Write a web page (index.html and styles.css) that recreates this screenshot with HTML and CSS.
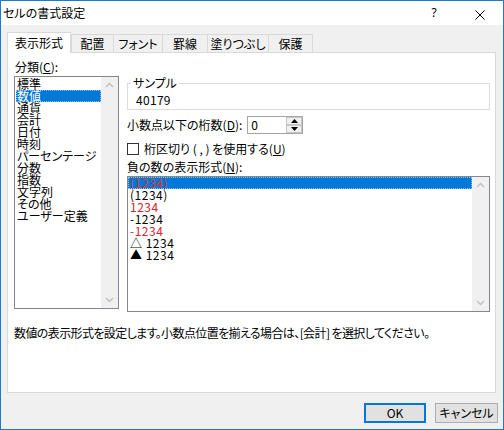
FILE: index.html
```html
<!DOCTYPE html>
<html lang="ja">
<head>
<meta charset="utf-8">
<title>セルの書式設定</title>
<link rel="stylesheet" href="styles.css">
</head>
<body>
<div class="window">
  <div class="titlebar">
    <span class="title">セルの書式設定</span>
    <span class="help">?</span>
    <svg class="close" width="10" height="10" viewBox="0 0 10 10"><path d="M0.5 0.5 L9.5 9.5 M9.5 0.5 L0.5 9.5" stroke="#000" stroke-width="1" fill="none"/></svg>
  </div>

  <div class="tabs">
    <div class="tab active">表示形式</div>
    <div class="tab first">配置</div>
    <div class="tab">フォント</div>
    <div class="tab">罫線</div>
    <div class="tab">塗りつぶし</div>
    <div class="tab">保護</div>
  </div>

  <div class="panel">
    <div class="panel-main">
      <div class="col-left">
        <div class="label label-cat">分類(<u>C</u>):</div>
        <div class="listbox cat">
          <ul class="items">
            <li>標準</li>
            <li class="sel">数値</li>
            <li>通貨</li>
            <li>会計</li>
            <li>日付</li>
            <li>時刻</li>
            <li>パーセンテージ</li>
            <li>分数</li>
            <li>指数</li>
            <li>文字列</li>
            <li>その他</li>
            <li>ユーザー定義</li>
          </ul>
          <div class="scrollbar">
            <svg class="arrow" width="17" height="17" viewBox="0 0 17 17"><polyline points="5,10 8.5,6.5 12,10" fill="none" stroke="#c2c2c2" stroke-width="1.5"/></svg>
            <svg class="arrow" width="17" height="17" viewBox="0 0 17 17"><polyline points="5,7 8.5,10.5 12,7" fill="none" stroke="#c2c2c2" stroke-width="1.5"/></svg>
          </div>
        </div>
      </div>

      <div class="col-right">
        <fieldset class="group">
          <legend>サンプル</legend>
          <div class="sample">40179</div>
        </fieldset>

        <div class="row-spin">
          <span class="label">小数点以下の桁数(<u>D</u>):</span>
          <div class="spin">
            <span class="spin-val">0</span>
            <div class="spin-btns">
              <span class="spin-btn"><svg width="7" height="4" viewBox="0 0 7 4"><polygon points="0,4 3.5,0 7,4" fill="#000"/></svg></span>
              <span class="spin-btn"><svg width="7" height="4" viewBox="0 0 7 4"><polygon points="0,0 3.5,4 7,0" fill="#000"/></svg></span>
            </div>
          </div>
        </div>

        <div class="row-check">
          <span class="checkbox"></span>
          <span class="label">桁区切り ( , ) を使用する(<u>U</u>)</span>
        </div>

        <div class="label label-neg">負の数の表示形式(<u>N</u>):</div>
        <div class="listbox neg">
          <ul class="items">
            <li class="sel red">(1234)</li>
            <li>(1234)</li>
            <li class="red">1234</li>
            <li>-1234</li>
            <li class="red">-1234</li>
            <li>△ 1234</li>
            <li>▲ 1234</li>
          </ul>
          <div class="scrollbar">
            <svg class="arrow" width="17" height="17" viewBox="0 0 17 17"><polyline points="5,10 8.5,6.5 12,10" fill="none" stroke="#c2c2c2" stroke-width="1.5"/></svg>
            <svg class="arrow" width="17" height="17" viewBox="0 0 17 17"><polyline points="5,7 8.5,10.5 12,7" fill="none" stroke="#c2c2c2" stroke-width="1.5"/></svg>
          </div>
        </div>
      </div>
    </div>

    <p class="desc">数値の表示形式を設定します。小数点位置を揃える場合は、[会計] を選択してください。</p>
  </div>

  <div class="footer">
    <button class="btn default">OK</button>
    <button class="btn cancel">キャンセル</button>
  </div>
</div>
</body>
</html>
```

FILE: styles.css
```css
* {
  box-sizing: border-box;
}

html,
body {
  margin: 0;
  padding: 0;
}

body {
  width: 504px;
  height: 430px;
  background: #f0f0f0;
  color: #000;
  font-family: "Noto Sans CJK JP", "Noto Sans", sans-serif;
  font-size: 12px;
  line-height: 12px;
  font-feature-settings: "palt";
}

.window {
  width: 504px;
  height: 430px;
  border: 1px solid #1b7acb;
  background: #f0f0f0;
  display: flex;
  flex-direction: column;
}

/* title bar */
.titlebar {
  height: 24px;
  flex: none;
  background: #fff;
  display: flex;
  align-items: center;
  padding-left: 2px;
}

.title {
  flex: 1;
}

.help {
  width: 12px;
  text-align: center;
  margin-right: 35px;
  font-family: "Noto Sans", sans-serif;
}

.close {
  display: block;
  margin-top: 4px;
  margin-right: 18px;
}

/* tabs */
.tabs {
  flex: none;
  display: grid;
  grid-template-columns: 64px 43px 49px 45px 61px 44px;
  align-items: end;
  height: 20px;
  margin: 7px 0 0 6px;
}

.tab {
  height: 18px;
  padding-top: 3px;
  border-top: 1px solid #d9d9d9;
  border-right: 1px solid #d9d9d9;
  background: #f0f0f0;
  text-align: center;
  white-space: nowrap;
}

.tab.first {
  border-left: 1px solid #d9d9d9;
}

.tab.active {
  position: relative;
  z-index: 1;
  height: 21px;
  margin-bottom: -1px;
  padding-top: 4px;
  border-left: 1px solid #d9d9d9;
  background: #fff;
}

/* panel */
.panel {
  flex: none;
  height: 341px;
  margin: 0 7px 0 6px;
  padding: 8px 6px 0;
  border: 1px solid #d9d9d9;
  background: #fff;
}

.panel-main {
  display: flex;
  gap: 8px;
}

.col-left {
  width: 105px;
  flex: none;
}

.col-right {
  width: 363px;
  flex: none;
  padding-top: 16px;
}

.label {
  white-space: nowrap;
}

.label-cat {
  padding-left: 1px;
  margin-bottom: 3px;
}

/* list boxes */
.listbox {
  display: flex;
  border: 1px solid #828790;
  background: #fff;
}

.listbox.cat {
  height: 233px;
}

.listbox.neg {
  height: 136px;
}

.items {
  flex: 1;
  margin: 0;
  padding: 0;
  list-style: none;
}

.cat .items {
  padding: 1px 0 0 1px;
}

.items li {
  height: 12px;
  line-height: 12px;
  padding-left: 1px;
  white-space: nowrap;
}

.neg .items li {
  padding-left: 2px;
  letter-spacing: 0.5px;
}

.items li.sel {
  background: #0078d7;
  color: #fff;
  outline: 1px dotted #8cc3ee;
  outline-offset: -1px;
}

.items li.red {
  color: #d8232a;
}

.items li.sel.red {
  color: #e0302c;
}

.scrollbar {
  width: 17px;
  flex: none;
  background: #f0f0f0;
  display: flex;
  flex-direction: column;
  justify-content: space-between;
}

.arrow {
  display: block;
}

/* group box */
.group {
  margin: 0;
  padding: 5px 0 3px 3px;
  border: 1px solid #dcdcdc;
  min-width: 0;
}

.group legend {
  padding: 0 2px;
  line-height: 12px;
}

.sample {
  padding-left: 5px;
  letter-spacing: 0.3px;
}

/* spin row */
.row-spin {
  display: flex;
  align-items: center;
  gap: 5px;
  margin-top: 6px;
}

.spin {
  width: 56px;
  height: 18px;
  display: flex;
  border: 1px solid #a6a6a6;
  background: #fff;
}

.spin-val {
  flex: 1;
  padding-left: 3px;
  line-height: 16px;
}

.spin-btns {
  width: 16px;
  flex: none;
  display: flex;
  flex-direction: column;
}

.spin-btn {
  flex: 1;
  display: flex;
  align-items: center;
  justify-content: center;
  border: 1px solid #c6c6c6;
  background: #f0f0f0;
}

.spin-btn svg {
  display: block;
}

/* checkbox row */
.row-check {
  display: flex;
  align-items: center;
  gap: 5px;
  height: 12px;
  margin-top: 9px;
}

.checkbox {
  width: 12px;
  height: 12px;
  flex: none;
  border: 1px solid #333;
  background: #fff;
}

.label-neg {
  margin-top: 6px;
  margin-bottom: 3px;
}

/* description */
.desc {
  margin: 15px 0 0;
  white-space: nowrap;
  letter-spacing: -0.6px;
}

/* footer */
.footer {
  flex: none;
  display: flex;
  justify-content: flex-end;
  gap: 9px;
  margin-top: 10px;
  padding-right: 5px;
}

.btn {
  width: 62px;
  height: 20px;
  padding: 0;
  border: 1px solid #adadad;
  background: #e1e1e1;
  color: #000;
  font: inherit;
  line-height: 12px;
  display: flex;
  align-items: center;
  justify-content: center;
}

.btn.default {
  border-color: #0078d7;
  box-shadow: inset 0 0 0 1px #0078d7;
}

.btn.cancel {
  width: 63px;
}
```
